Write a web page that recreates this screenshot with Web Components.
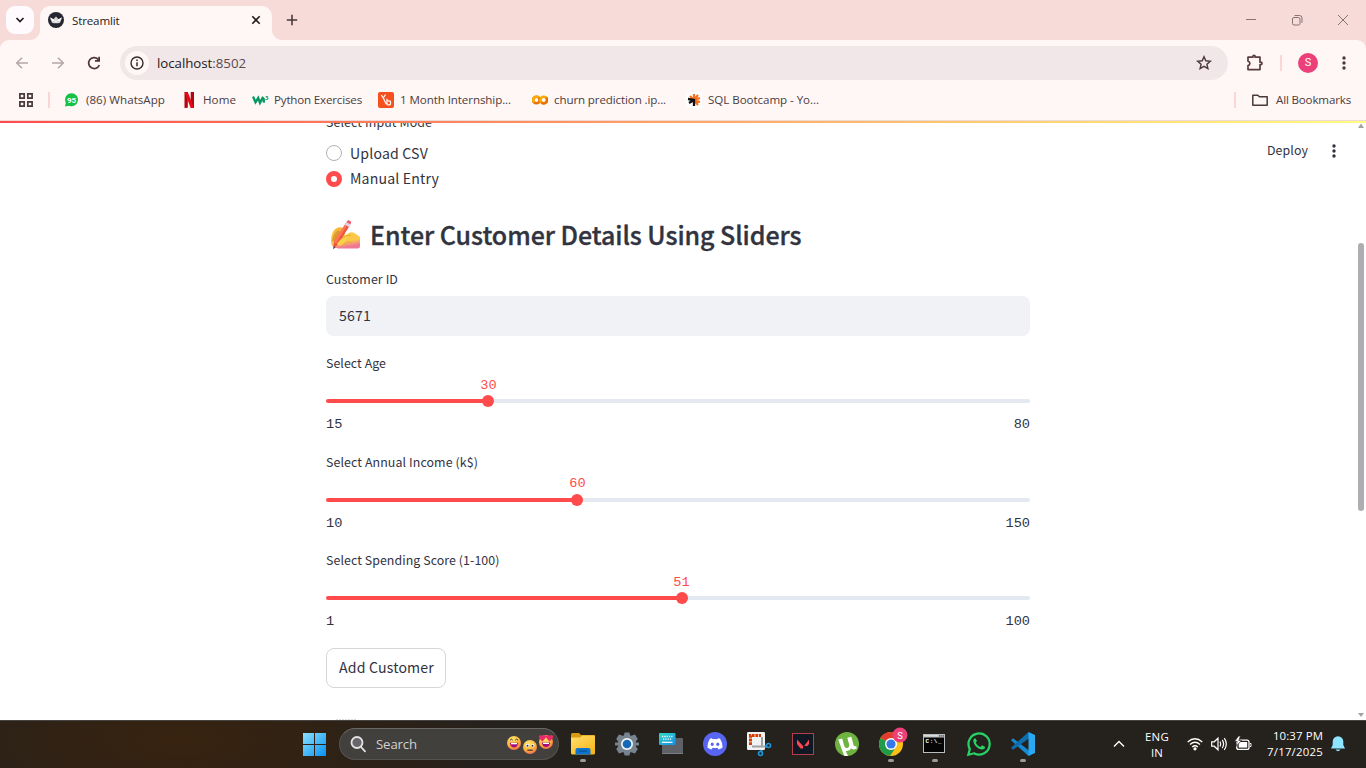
<!DOCTYPE html>
<html lang="en"><head><meta charset="utf-8"><title>Streamlit</title>
<style>
html,body{margin:0;width:1366px;height:768px;overflow:hidden;background:#fff}
body{display:grid;grid-template-rows:121px 599px 48px}
</style></head><body>
<browser-chrome></browser-chrome>
<streamlit-app></streamlit-app>
<task-bar></task-bar>
<script>
const define=(name,html,setup)=>customElements.define(name,class extends HTMLElement{
  constructor(){super();this.attachShadow({mode:'open'});}
  connectedCallback(){this.shadowRoot.innerHTML=typeof html==='function'?html(this):html;if(setup)setup(this);}
});

/* Text whose tracking is adjusted so that it spans the width given in "w". */
customElements.define('fit-text',class extends HTMLElement{
  connectedCallback(){
    if(this.shadowRoot)return;
    this.attachShadow({mode:'open'}).innerHTML='<style>:host{display:block;white-space:pre;flex:none}span{display:inline-block}</style><span><slot></slot></span>';
    const w=+this.getAttribute('w');if(!w)return;
    const s=this.shadowRoot.querySelector('span');
    const n=this.textContent.length;
    const d=(w-s.getBoundingClientRect().width)/n;
    s.style.letterSpacing=d.toFixed(3)+'px';
    this.style.width=w+'px';
  }
});

define('book-mark',el=>`<style>:host{display:flex;align-items:center;height:20px;flex:none;font:11.6px/16px "Open Sans",sans-serif;color:#4b3c3e}
.i{width:16px;height:16px;margin-right:${el.getAttribute('gap')||6}px;display:block}::slotted(svg){display:block}</style>
<div class="i"><slot name="icon"></slot></div><fit-text w="${el.getAttribute('w')}">${el.getAttribute('label')}</fit-text>`);

define('browser-chrome',`<style>
:host{display:flex;flex-direction:column;background:#f7dbd8;font-family:"Open Sans",sans-serif;color:#241a1b}
svg{display:block;flex:none}
.tabs{height:40px;display:flex;align-items:flex-start;padding-left:6px;box-sizing:border-box}
.chev{width:28px;height:28px;margin-top:6px;border-radius:9px;background:#fffafe;display:grid;place-items:center}
.tab{position:relative;margin:6px 0 0 6px;width:232px;height:34px;box-sizing:border-box;background:#fff7f6;border-radius:10px 10px 0 0;display:flex;align-items:center;padding:0 9px 6px 8px;font-size:11.6px}
.tab:before,.tab:after{content:"";position:absolute;bottom:0;width:10px;height:10px}
.tab:before{left:-10px;background:radial-gradient(circle at 0 0,#0000 9.6px,#fff7f6 10.2px)}
.tab:after{right:-10px;background:radial-gradient(circle at 100% 0,#0000 9.6px,#fff7f6 10.2px)}
.tab fit-text{margin:0 auto 0 8px}
.plus{margin:14px 0 0 14px}
.win{margin:10px 13px 0 auto;display:flex;gap:26px}
.panel{height:80px;background:#fff7f6;border-radius:9px 9px 0 0;display:flex;flex-direction:column}
.nav{height:46px;display:flex;align-items:center;padding-left:14px}
.nav>svg{margin-right:20px}
.addr{width:1108px;height:34px;border-radius:17px;background:#f1e6e8;display:flex;align-items:center;box-sizing:border-box;padding:0 16px 0 5px;font-size:13.3px}
.info{width:24px;height:24px;border-radius:50%;background:#fff7f6;display:grid;place-items:center;margin-right:8px}
.addr fit-text{margin-right:auto}.addr i{font-style:normal;color:#5b4b4d}
.sep{width:2px;height:16px;background:#fcd6d4;flex:none}
.av{width:20px;height:20px;border-radius:50%;background:#ec407a;color:#fff;font:11px/20px Roboto,sans-serif;text-align:center;margin:0 18px 0 16px}
.marks{height:28px;display:flex;align-items:center;padding-left:18px}
.marks svg{display:block}
.line{height:1px;background:#f0dad9}
</style>
<div class="tabs"><div class="chev"><svg width="12" height="12" viewBox="0 0 12 12"><path d="M2.500 4l3.500 3.500L9.500 4" fill="none" stroke="#241a1b" stroke-width="1.700"/></svg></div>
<div class="tab"><svg width="16" height="16" viewBox="0 0 16 16"><circle cx="8" cy="8" r="8" fill="#262730"/><path d="M2 5.500L5.500 7.300 8 4.600l2.500 2.700L14 5.500l-2 5.300q-4 1-8 0z" fill="#d9d9dc"/><path d="M2 5.500l3.500 1.800L8 10.500l2.500-3.200L14 5.500 11.500 9h-7z" fill="#fff"/></svg>
<fit-text w="47.500">Streamlit</fit-text><svg width="14" height="14" viewBox="0 0 14 14"><path d="M3.300 3.300l7.400 7.400M10.700 3.300l-7.400 7.400" stroke="#241a1b" stroke-width="1.600"/></svg></div>
<svg class="plus" width="12" height="12" viewBox="0 0 12 12"><path d="M6 .8v10.400M.8 6h10.400" stroke="#4a393a" stroke-width="1.600"/></svg>
<div class="win"><svg width="20" height="20" viewBox="0 0 20 20"><path d="M5 9.500h10" stroke="#857574"/></svg><svg width="20" height="20" viewBox="0 0 20 20" fill="none" stroke="#857574"><rect x="5.500" y="7.500" width="7.500" height="7.500" rx="1.500"/><path d="M7.500 5.500h5q2.500 0 2.500 2.500v4.800"/></svg><svg width="20" height="20" viewBox="0 0 20 20"><path d="M5 5l10 10M15 5L5 15" stroke="#857574"/></svg></div></div>
<div class="panel"><div class="nav">
<svg width="16" height="16" viewBox="0 0 16 16" fill="none" stroke="#b5a6a7" stroke-width="1.500"><path d="M14 8H3M8 2.700L2.700 8 8 13.300"/></svg>
<svg width="16" height="16" viewBox="0 0 16 16" fill="none" stroke="#b5a6a7" stroke-width="1.500"><path d="M2 8h11M8 2.700L13.300 8 8 13.300"/></svg>
<svg style="margin-right:18px" width="16" height="16" viewBox="0 0 16 16"><path d="M13.300 10A5.500 5.500 0 1 1 12 4.100l1.200 1.200" fill="none" stroke="#4d3639" stroke-width="1.700"/><path d="M9 6.700V5.100h3.300V1.800H14v4.900z" fill="#4d3639"/></svg>
<div class="addr"><div class="info"><svg width="14" height="14" viewBox="0 0 14 14"><circle cx="7" cy="7" r="6" fill="none" stroke="#37292b" stroke-width="1.400"/><path d="M7 6.200v4.100M7 3.400v1.500" stroke="#37292b" stroke-width="1.500"/></svg></div><fit-text w="89">localhost<i>:8502</i></fit-text>
<svg width="16" height="16" viewBox="0 0 16 16"><path d="M8 1.700l1.800 4.100 4.500.4-3.400 3 1 4.400L8 11.300l-3.900 2.300 1-4.400-3.400-3 4.500-.4z" fill="none" stroke="#4b393b" stroke-width="1.400"/></svg></div>
<svg style="margin:0 16px 0 18px" width="18" height="18" viewBox="0 0 18 18"><path d="M2 3.200h4.900V2.500a1.100 1.100 0 0 1 2.200 0v.7h4.900v5h.8a1.200 1.200 0 0 1 0 2.400H14v5H2v-4c2.500-.7 2.500-3.700 0-4.400z" fill="none" stroke="#583c3d" stroke-width="1.700" stroke-linejoin="round"/></svg>
<div class="sep"></div><div class="av">S</div><svg style="margin:0" width="16" height="16" viewBox="0 0 16 16" fill="#4b393b"><circle cx="8" cy="3" r="1.700"/><circle cx="8" cy="8" r="1.700"/><circle cx="8" cy="13" r="1.700"/></svg></div>
<div class="marks"><svg width="16" height="16" viewBox="0 0 16 16" fill="none" stroke="#4b393b" stroke-width="1.700"><path d="M1.900 1.900h4.300v4.300H1.900zM9.800 1.900h4.300v4.300H9.800zM1.900 9.800h4.300v4.300H1.900zM9.800 9.800h4.300v4.300H9.800z"/></svg><div class="sep" style="margin:0 14px 0 14px"></div>
<book-mark label="(86) WhatsApp" w="79"><svg slot="icon" width="16" height="16" viewBox="0 0 16 16"><path d="M7.500 1.200a6.500 6.500 0 1 1-2.500 12.500L1 14.400l.8-3.700A6.500 6.500 0 0 1 7.500 1.200z" fill="#13c143"/><text x="7.600" y="10.700" font-family="Roboto" font-weight="700" font-size="8" fill="#fff" text-anchor="middle">95</text></svg></book-mark>
<book-mark style="margin-left:16px" label="Home" gap="6" w="33"><svg slot="icon" width="16" height="16" viewBox="0 0 16 16"><path d="M3.500 0h3.300v15.800l-3.300.2zM9.700 0H13v16l-3.300-.3z" fill="#b1060f"/><path d="M3.500 0h3.300L13 16l-3.400-.3z" fill="#e50914"/></svg></book-mark>
<book-mark style="margin-left:16px" label="Python Exercises" w="88"><svg slot="icon" width="17" height="16" viewBox="0 0 17 16"><path d="M1 4.500l2.500 5.800 2.700-4.500 1.800 5 2.600-5q2 1 .9 4.800" fill="none" stroke="#059862" stroke-width="2.300"/><text x="13" y="7.500" font-family="Open Sans" font-weight="700" font-size="6" fill="#059862">3</text></svg></book-mark>
<book-mark style="margin-left:16px" label="1 Month Internship..." w="111"><svg slot="icon" width="16" height="16" viewBox="0 0 16 16"><rect width="16" height="16" rx="2" fill="#f4511e"/><path d="M3.300 3l2 3 2.200-3.500M5.300 6l3 6.300M9 6.800v5q0 1 1 1h1.500q1 0 1-1v-2q0-1-1-1H9" fill="none" stroke="#fff" stroke-width="1.200"/></svg></book-mark>
<book-mark style="margin-left:21px" label="churn prediction .ip..." w="112"><svg slot="icon" width="16" height="16" viewBox="0 0 16 16" fill="none" stroke-width="2.600"><circle cx="4.400" cy="8" r="3.300" stroke="#e8710a"/><path d="M6.900 5.700A3.300 3.300 0 1 0 2.100 10.400" stroke="#f9ab00"/><circle cx="11.700" cy="8" r="3.300" stroke="#f9ab00"/><path d="M9.400 10.400a3.300 3.300 0 0 0 4.700-4.700" stroke="#e8710a"/></svg></book-mark>
<book-mark style="margin-left:20px" label="SQL Bootcamp - Yo..." w="111"><svg slot="icon" width="16" height="16" viewBox="0 0 16 16"><rect width="16" height="16" rx="2" fill="#fff"/><path d="M8 8V2M8 8l4-5M8 8l6-2M8 8l6 2M8 8l4 5M8 8L4 4" stroke="#f4721e" stroke-width="2.200"/><path d="M8 7v7M8 8l-6-1M8 8l-5 3" stroke="#111" stroke-width="2.300"/></svg></book-mark>
<div class="sep" style="margin-left:auto"></div>
<book-mark style="margin:0 15px 0 16px" gap="8" label="All Bookmarks" w="75"><svg slot="icon" width="16" height="16" viewBox="0 0 16 16"><path d="M.8 12.700V3.200h5l1.600 1.600h7.800v8.500H.8z" fill="none" stroke="#4b393b" stroke-width="1.500" stroke-linejoin="round"/></svg></book-mark>
</div></div><div class="line"></div>`);

define('radio-option',el=>`<style>:host{display:flex;align-items:center;height:25px;font-size:14.1px}
b{width:16px;height:16px;border-radius:50%;box-sizing:border-box;margin-right:8px;${el.hasAttribute('checked')?'margin-top:1px;border:5px solid #ff4b4b':'border:1px solid #b2b2b5'}}</style><b></b><fit-text w="${el.getAttribute('w')}">${el.textContent}</fit-text>`);

define('range-slider',el=>{
 const p=el.getAttribute('pos'),g=n=>el.getAttribute(n);
 return `<style>:host{display:block;height:98.500px}
 .lab{font-size:12.400px;height:20px;line-height:20px}
 .val,.ends{font:13.600px/20px "Liberation Mono",monospace}
 .val{color:#ff4b4b;margin:2.900px 0 0 ${p}px;width:0;display:flex;justify-content:center;height:20px}
 .track{height:4px;border-radius:2px;margin-top:3.200px;background:linear-gradient(90deg,#ff4b4b ${p}px,#e4e8f0 ${p}px);display:flex;align-items:center}
 .track i{width:12px;height:12px;border-radius:50%;background:#ff4b4b;margin-left:${p-6}px}
 .ends{display:flex;justify-content:space-between;margin-top:12px}</style>
 <div class="lab"><fit-text w="${g('w')}">${g('label')}</fit-text></div><div class="val">${g('value')}</div><div class="track"><i></i></div><div class="ends"><span>${g('min')}</span><span>${g('max')}</span></div>`});

define('streamlit-app',`<style>
:host{display:grid;grid-template-columns:326px 704px 1fr;position:relative;overflow:hidden;background:#fff;color:#31333f;font-family:"Noto Sans CJK SC",sans-serif;height:599px}
.deco{position:absolute;left:0;top:0;width:100%;height:2px;background:linear-gradient(90deg,#ff4b4b,#fffd80);z-index:2}
main{grid-column:2;height:599px;overflow:hidden}
.lab{font-size:12.400px;height:20px;line-height:20px}
.mode{margin-top:-9px}
.radios{margin-top:8px}
.radios radio-option+radio-option{height:26px}
h2{margin:27px 0 0;height:34px;display:flex;align-items:center;font-size:25px;line-height:34px;font-weight:500;-webkit-text-stroke:.35px #31333f}
h2 svg{margin:0 8px 0 3px;flex:none}
h2 fit-text{margin-top:-2px}
.field{height:40px;background:#f0f2f6;border-radius:8px;margin-top:7px;display:flex;align-items:center;padding-left:13px;font-size:14.100px}
.field fit-text{margin-top:-3px}
.btn{width:120px;height:40px;border:1px solid #d6d6d9;border-radius:8px;box-sizing:border-box;display:flex;justify-content:center;align-items:center;font-size:14.100px;margin-top:-1px}
.btn fit-text{margin:-1px 0 0 1px}
.side{display:flex;justify-content:flex-end}
.head{display:flex;align-items:center;height:20px;margin:20px 14px 0 0;font-size:12.400px}
.head svg{margin-left:18px}.head fit-text{margin-top:-3px}
.scroll{width:10px;display:flex;flex-direction:column;align-items:center}
.scroll i{width:6px;height:268px;border-radius:3px;background:#aeadb2;margin:113px 0 auto}
.below{height:1px;width:20px;margin:31px 0 0 10px;background:repeating-linear-gradient(90deg,#ddd 0 2px,#fff 2px 3px)}
</style><div class="deco"></div>
<main><div class="lab mode"><fit-text w="106">Select Input Mode</fit-text></div>
<div class="radios"><radio-option w="78">Upload CSV</radio-option><radio-option checked w="89">Manual Entry</radio-option></div>
<h2><svg width="33" height="34" viewBox="0 0 33 34"><defs><linearGradient id="h" x2=".25" y2="1"><stop stop-color="#f2ae35"/><stop offset=".4" stop-color="#fecb41"/><stop offset=".75" stop-color="#fbc64a"/><stop offset="1" stop-color="#ee7795"/></linearGradient></defs>
<g transform="translate(0 1)"><path d="M2 23.500C2 16 3.500 10.500 9 8.500q4.500-1.200 6.500 2L16 17l4-3.200q3-1.300 5 0L31 18v9.500q0 2-2.500 2H9q-4-1-6.200-3z" fill="url(#h)"/><path d="M3 22q.5-8 7-11l2 3-4 9z" fill="#dd9a32"/><path d="M11 21q6-6 11-4.500M15 25q4-4 8-1" fill="none" stroke="#e9a834"/>
<path d="M17.300 3.500l4 2.300L9.300 25l-5 5 .6-7z" fill="#ef5540"/><path d="M17.300 3.500l1.800 1L7 24.500 4.900 23z" fill="#ff7656"/><path d="M16 5.800l4 2.300 1.500-2.500-4-2.300z" fill="#dcd6ef"/><path d="M17.500 3.200l.8-1.500q1.700-1.200 3.900 1.200l-.7 2.600z" fill="#ee5a66"/><path d="M4.700 27l2 1.200-2.500 2z" fill="#67415c"/>
<path d="M12 20l5-1.500q2 2-1 4.500L11.500 26.500q-3 .5-3.500-2z" fill="#fdd04c"/></g></svg><fit-text w="431.500">Enter Customer Details Using Sliders</fit-text></h2>
<div class="lab" style="margin-top:17px"><fit-text w="72">Customer ID</fit-text></div>
<div class="field"><fit-text w="32">5671</fit-text></div>
<div style="height:17px"></div>
<range-slider label="Select Age" w="60" value="30" min="15" max="80" pos="162.450"></range-slider>
<range-slider label="Select Annual Income (k$)" w="152" value="60" min="10" max="150" pos="251.400"></range-slider>
<range-slider label="Select Spending Score (1-100)" w="173.500" value="51" min="1" max="100" pos="355.500"></range-slider>
<div class="btn"><fit-text w="95">Add Customer</fit-text></div><div class="below"></div></main>
<div class="side"><div class="head"><fit-text w="41">Deploy</fit-text><svg width="16" height="16" viewBox="0 0 16 16" fill="#31333f"><circle cx="8" cy="3" r="1.700"/><circle cx="8" cy="8" r="1.700"/><circle cx="8" cy="13" r="1.700"/></svg></div>
<div class="scroll"><svg width="8" height="9" viewBox="0 0 8 9"><path d="M1 7L4 2.500 7 7z" fill="#a3a3a3"/></svg><i></i><svg width="8" height="9" viewBox="0 0 8 9"><path d="M1 2h6L4 6z" fill="#a3a3a3"/></svg></div></div>`);

/* One 44px taskbar slot; "run" marks an application with an open window. */
define('task-icon',el=>`<style>:host{display:flex;flex-direction:column;align-items:center;width:44px;height:48px;flex:none}
div{height:24px;margin-top:12px}i{width:6px;height:3px;border-radius:2px;margin-top:3px;background:${el.hasAttribute('run')?'#9d9a97':'none'}}::slotted(svg){display:block}</style><div><slot></slot></div><i></i>`);

define('task-bar',`<style>
:host{display:flex;box-sizing:border-box;height:48px;background:radial-gradient(ellipse 330px 110px at 180px 20px,#38230f,#25211d00),#25211d;box-shadow:inset 0 1px #464442;color:#fff;font-family:"Open Sans",sans-serif;padding-left:303px;align-items:flex-start}
svg{display:block;overflow:visible}
.search{width:220px;height:32px;box-sizing:border-box;border:1px solid #555250;border-top-color:#6b6866;border-radius:16px;background:#42403d;margin:8px 2px 0 12px;display:flex;align-items:center;padding:0 5px 0 10px;font-size:13.200px;color:#d3d1cf}
.search fit-text{margin:0 auto 0 10px}
.start{margin-top:13px}
.tray{margin-left:auto;display:flex;height:48px;align-items:center;font-size:11.400px;line-height:16px}
.col{display:flex;flex-direction:column;align-items:center}.r{align-items:flex-end}
</style>
<svg class="start" width="24" height="24" viewBox="0 0 24 24"><defs><linearGradient id="w" x2="1" y2="1"><stop stop-color="#8be1ff"/><stop offset="1" stop-color="#0891ef"/></linearGradient></defs><path d="M0 0h11v11H0zM12 0h11v11H12zM0 12h11v11H0zM12 12h11v11H12z" fill="url(#w)"/></svg>
<div class="search"><svg width="16" height="16" viewBox="0 0 16 16" fill="none" stroke="#e4e3e4" stroke-width="1.800"><circle cx="7" cy="6.500" r="5.500" fill="#68666a"/><path d="M11 11l4 4.300" stroke-linecap="round"/></svg><fit-text w="41">Search</fit-text>
<svg width="46" height="20" viewBox="0 0 46 20"><defs><radialGradient id="f" cx=".4" cy=".25" r=".8"><stop stop-color="#ffe76b"/><stop offset=".6" stop-color="#fdb43d"/><stop offset="1" stop-color="#ee6450"/></radialGradient></defs><circle cx="7" cy="9" r="7" fill="url(#f)"/><path d="M2.800 8.700h8.400Q10.500 13.500 7 13.500T2.800 8.700z" fill="#a50c79"/><path d="M4 9h6v1.300H4z" fill="#fff"/><path d="M3 6.200q1.300-2 2.800 0M8.200 6.200q1.300-2 2.800 0" stroke="#49324b" fill="none"/><circle cx="23" cy="13" r="7" fill="url(#f)"/><circle cx="20.400" cy="11.500" r="1.800" fill="#fff"/><circle cx="25.600" cy="11.500" r="1.800" fill="#fff"/><circle cx="20.500" cy="11.700" r="1" fill="#402b48"/><circle cx="25.500" cy="11.700" r="1" fill="#402b48"/><path d="M20.300 16.200h5.400" stroke="#553140" stroke-width="1.300"/><circle cx="39" cy="8" r="7" fill="url(#f)"/><path d="M34.800 8.500h8.400Q42.500 13 39 13t-4.200-4.500z" fill="#a50c79"/><path d="M36 8.700h6V10h-6z" fill="#fff"/><path d="M35.500 7.500L32 4q-.5-3 2-3l1.500 1L37 1q3 0 1.600 3zM42.500 7.500L39.400 4Q38 1 41 1l1.500 1L44 1q3 0 2 3z" fill="#e72b68"/></svg></div>
<task-icon run><svg width="24" height="24" viewBox="0 0 24 24"><defs><linearGradient id="a" x2=".8" y2="1"><stop stop-color="#ffe06d"/><stop offset="1" stop-color="#f7b51c"/></linearGradient></defs><path d="M0 2.500Q0 1 1.500 1H8l2 2h13q1 0 1 1v6H0z" fill="#d89b10"/><path d="M0 5.500h9l2.500-2H23q1 0 1 1V21q0 1.500-1.500 1.500h-21Q0 22.500 0 21z" fill="url(#a)"/><path d="M4.500 22.500V18q0-2 2-2h11q2 0 2 2v4.500z" fill="#0c73cf"/><path d="M8 19.200h8" stroke="#07559d" stroke-width="1.300"/></svg></task-icon>
<task-icon><svg width="24" height="24" viewBox="-12 -12 24 24"><g fill="#77838e"><circle r="9"/><path d="M-3.500-8L-2.300-11.500h4.600L3.500-8 8-9.500 10.800-5 8.500-2v4l2.300 3L8 9.500 3.500 8 2.300 11.500h-4.600L-3.500 8-8 9.500-10.800 5-8.500 2v-4L-10.800-5-8-9.500z"/><path d="M-12-1.500h4v3h-4zM8-1.500h4v3H8z"/></g><circle r="6" fill="#f1f4f7"/><circle r="4.300" fill="#1468b5"/></svg></task-icon>
<task-icon><svg width="24" height="24" viewBox="0 0 24 24"><defs><linearGradient id="k" x2=".8" y2="1"><stop stop-color="#30dbc2"/><stop offset="1" stop-color="#1793e5"/></linearGradient></defs><rect x="3" y="6" width="21" height="16" rx="1" fill="#5e6266"/><path d="M3 21h21v1H3z" fill="#7a7e80"/><rect y="1" width="16.500" height="12" rx="1" fill="url(#k)"/><path d="M3 4.500h10.500M4 7.200h9" stroke="#fff" stroke-width="1.300" stroke-dasharray="1.300 1"/><path d="M3 10.300h10.500" stroke="#fff" stroke-width="1.200"/></svg></task-icon>
<task-icon><svg width="24" height="24" viewBox="0 0 24 24"><circle cx="12" cy="12" r="12" fill="#5865f2"/><path d="M8.700 6.300l1.100.9q2.200-.4 4.400 0l1.100-.9 1.800.5q2.500 4 2.500 8.600-2 1.500-4 2l-1.200-1.600q-2.400.5-4.800 0l-1.200 1.600q-2-.5-4-2 0-4.600 2.500-8.600z" fill="#fff"/><ellipse cx="9.200" cy="12.300" rx="1.500" ry="1.700" fill="#5865f2"/><ellipse cx="14.800" cy="12.300" rx="1.500" ry="1.700" fill="#5865f2"/></svg></task-icon>
<task-icon><svg width="24" height="24" viewBox="0 0 24 24"><rect width="18" height="18" rx="1.200" fill="#f1f2f3"/><path d="M3.500 13V3.500H14" fill="none" stroke="#d83b01" stroke-width="3" stroke-dasharray="2.800 .8"/><path d="M15 5v8.500M5 14.500h14M14.500 14.500h3" stroke="#9ea3a6" stroke-width="2"/><path d="M18 14.500h2M14.500 18v2" stroke="#1b98df" stroke-width="2"/><circle cx="21.500" cy="13.500" r="2" fill="none" stroke="#1b98df" stroke-width="1.600"/><circle cx="13.500" cy="21.500" r="2" fill="none" stroke="#1b98df" stroke-width="1.600"/></svg></task-icon>
<task-icon><svg width="24" height="24" viewBox="0 0 24 24"><rect x="1.500" y="1.500" width="21" height="21" fill="#101923" stroke="#b63e4c"/><path d="M6 7.500l6 6.500v2.500H9.500L6 12zM18 7.500V12l-1.500 2h-3.300z" fill="#ff4655"/></svg></task-icon>
<task-icon><svg width="24" height="24" viewBox="0 0 24 24"><circle cx="12" cy="12" r="12" fill="#6db33f"/><path d="M3.200 7.500l4-.9 2 7.200q.9 2.600 3 2.100 2.500-.6 1.900-3.600l-1.800-6.600 4-.9 2.300 8.400q.5 1.600 2.500.9l.7 2.300q-3.800 2.300-5.600-.2-1.500 3.300-5.500 2.700l2.300 5q-2 .4-4-.4z" fill="#fff"/></svg></task-icon>
<task-icon run><svg width="24" height="24" viewBox="0 0 24 24"><circle cx="12" cy="12" r="12" fill="#fbc116"/><path d="M12 12L1.600 6A12 12 0 0 1 22.400 6H12z" fill="#e33b2e"/><path d="M1.600 6A12 12 0 0 0 11 24l6-9-5-3z" fill="#229b49"/><circle cx="12" cy="12" r="6" fill="#fff"/><circle cx="12" cy="12" r="4.600" fill="#3579e8"/><circle cx="21" cy="3" r="7.500" fill="#ec407a"/><text x="21" y="6.500" text-anchor="middle" font-family="Roboto" font-size="9.500" fill="#fff">S</text></svg></task-icon>
<task-icon run><svg width="24" height="24" viewBox="0 0 24 24"><rect x="0" y="2" width="22" height="19" fill="#b9bcbe"/><rect x="1" y="5.500" width="20" height="14.500" fill="#050505"/><path d="M1 3.800h14" stroke="#e9e9e9"/><path d="M16 3.800h5" stroke="#555" stroke-width="1.200" stroke-dasharray="1.300 .6"/><text x="2.500" y="11" font-family="Liberation Mono" font-weight="700" font-size="6" textLength="16" fill="#fff">C:\\_</text></svg></task-icon>
<task-icon><svg width="24" height="24" viewBox="0 0 24 24"><path d="M1.300 22.700l1.500-5.600A10.600 10.600 0 1 1 7 21.300z" fill="none" stroke="#25d366" stroke-width="2.200"/><path d="M8.300 6.200c-1-.1-2.100 1.300-2 2.600.4 4.500 4.600 8.500 9 8.700 1.500 0 3-1.200 2.800-2.500l-3-1.700-1.600 1.800c-2.200-.8-3.800-2.400-4.700-4.500L10 9z" fill="#25d366"/></svg></task-icon>
<task-icon run><svg width="24" height="24" viewBox="0 0 24 24"><path d="M0 8.200l2-2L20 20l-2.500 4z" fill="#1689d1"/><path d="M0 15.800l2 2L20 5 17.500 0z" fill="#0d6dad"/><path d="M17.500 0L24 3v18l-6.500 3z" fill="#2aa9f2"/></svg></task-icon>
<div class="tray"><svg style="margin-right:20px" width="12" height="12" viewBox="0 0 12 12"><path d="M1 8.500l5-5 5 5" fill="none" stroke="#fff" stroke-width="1.400"/></svg>
<div class="col" style="margin:1px 18px 0 0"><fit-text w="24">ENG</fit-text><fit-text w="12">IN</fit-text></div>
<svg style="margin-right:8px" width="16" height="14" viewBox="0 0 16 14" fill="none" stroke="#fff" stroke-width="1.300"><path d="M.7 5q7.300-6.500 14.600 0M3 7.500q5-4.500 10 0M5.200 10q2.800-2.500 5.600 0"/><circle cx="8" cy="11.800" r="1" fill="#fff"/></svg>
<svg style="margin-right:8px" width="16" height="14" viewBox="0 0 16 14" fill="none" stroke="#fff" stroke-width="1.200"><path d="M.7 4.800h2.500L7 1.200v11.600L3.200 9.200H.7zM9 4.500q1.500 2.500 0 5M11.200 2.800q2.800 4.200 0 8.400M13.300 1.200q4 5.800 0 11.600"/></svg>
<svg style="margin-right:15px" width="17" height="14" viewBox="0 0 17 14"><rect x="1.700" y="3.200" width="12.300" height="9.200" rx="2" fill="none" stroke="#fff" stroke-width="1.300"/><rect x="3.700" y="5" width="8.500" height="5.600" fill="#fff"/><path d="M15 6.500h1v3h-1" stroke="#fff"/><path d="M3.500-1L-.5 4.500h2.700L1 9.500l5.500-6H3.800L5.500-1z" fill="#fff" stroke="#25211d" stroke-width=".7"/></svg>
<div class="col r"><fit-text w="50">10:37 PM</fit-text><fit-text w="56">7/17/2025</fit-text></div>
<svg style="margin:0 21px 0 8px" width="14" height="16" viewBox="0 0 14 16"><path d="M0 12.500L1.700 9V5.500A5.300 5.300 0 0 1 12.300 5.500V9L14 12.500zM4.500 13.500h5q-2.500 3.500-5 0z" fill="#8ee5ff"/></svg></div>`);
</script></body></html>
